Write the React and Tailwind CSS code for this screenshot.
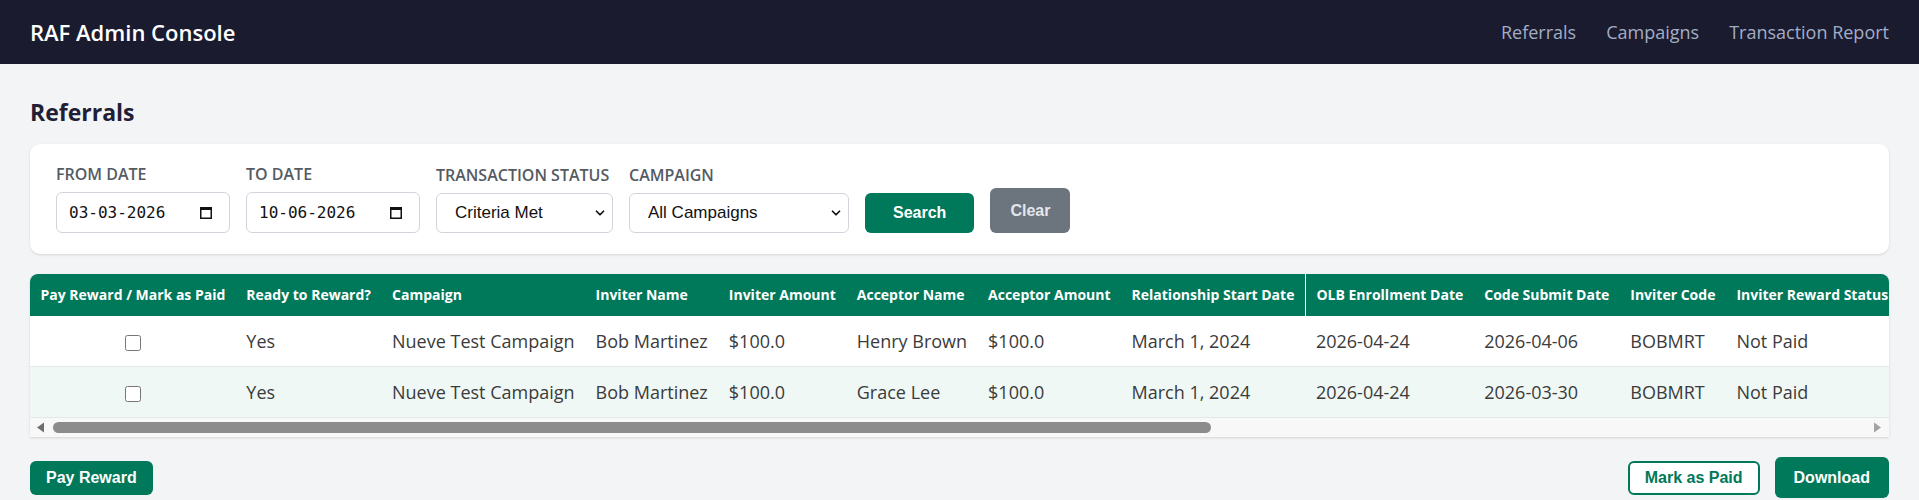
import { ChevronDown } from 'lucide-react';

const GREEN = 'bg-[#00785a]';

const columns = [
  'Pay Reward / Mark as Paid',
  'Ready to Reward?',
  'Campaign',
  'Inviter Name',
  'Inviter Amount',
  'Acceptor Name',
  'Acceptor Amount',
  'Relationship Start Date',
  'OLB Enrollment Date',
  'Code Submit Date',
  'Inviter Code',
  'Inviter Reward Status',
];

const rows = [
  {
    ready: 'Yes', campaign: 'Nueve Test Campaign', inviter: 'Bob Martinez', inviterAmt: '$100.0',
    acceptor: 'Henry Brown', acceptorAmt: '$100.0', relStart: 'March 1, 2024', olb: '2026-04-24',
    submit: '2026-04-06', code: 'BOBMRT', inviterStatus: 'Not Paid',
  },
  {
    ready: 'Yes', campaign: 'Nueve Test Campaign', inviter: 'Bob Martinez', inviterAmt: '$100.0',
    acceptor: 'Grace Lee', acceptorAmt: '$100.0', relStart: 'March 1, 2024', olb: '2026-04-24',
    submit: '2026-03-30', code: 'BOBMRT', inviterStatus: 'Not Paid',
  },
];

function CalendarIcon() {
  return (
    <svg width="14" height="15" viewBox="0 0 14 15" className="shrink-0">
      <rect x="1.75" y="2.75" width="10.5" height="10.5" fill="none" stroke="#111" strokeWidth="1.5" />
      <rect x="1" y="2" width="12" height="3" fill="#111" />
    </svg>
  );
}

function DateField({ label, value }) {
  return (
    <div className="flex flex-col">
      <span className="mb-1.5 text-base leading-6 font-semibold text-[#555b63] uppercase">{label}</span>
      <div className="flex h-[41px] w-[174px] items-center justify-between rounded-md border border-[#d1d5db] bg-white pl-3 pr-4">
        <span className="font-['DejaVu_Sans_Mono',monospace] text-base text-[#111]">{value}</span>
        <CalendarIcon />
      </div>
    </div>
  );
}

function SelectField({ label, value, width }) {
  return (
    <div className="flex flex-col">
      <span className="mb-1.5 text-base leading-6 font-semibold text-[#555b63] uppercase whitespace-nowrap">{label}</span>
      <div className={`relative ${width}`}>
        <select
          defaultValue={value}
          className="h-10 w-full appearance-none rounded-md border border-[#d1d5db] bg-white pl-[18px] pr-6 font-['Liberation_Sans',Arial,sans-serif] text-[17px] text-[#111]"
        >
          <option>{value}</option>
        </select>
        <ChevronDown size={14} strokeWidth={3} className="pointer-events-none absolute right-[6px] top-[13px] text-[#111]" />
      </div>
    </div>
  );
}

function ScrollBar() {
  return (
    <div className="flex h-[19px] items-center bg-[#f8f8f8] pl-[6px] pr-[7px]">
      <svg width="9" height="11" viewBox="0 0 9 11">
        <path d="M8 0.5v10L1 5.5z" fill="#6f6f6f" />
      </svg>
      <div className="ml-2 h-[11px] w-[1158px] rounded-full bg-[#8c8c8c]" />
      <div className="flex-1" />
      <svg width="9" height="11" viewBox="0 0 9 11">
        <path d="M1 0.5v10L8 5.5z" fill="#a3a3a3" />
      </svg>
    </div>
  );
}

export default function App() {
  return (
    <div className="min-h-screen w-full bg-[#f3f4f6] font-['Open_Sans',sans-serif]">
      <header className="flex h-16 items-center justify-between bg-[#1a1b2f] px-[30px]">
        <h1 className="text-[22px] font-semibold text-white">RAF Admin Console</h1>
        <nav className="flex items-center gap-[30px] text-lg text-[#a3adc4]">
          <a>Referrals</a>
          <a>Campaigns</a>
          <a>Transaction Report</a>
        </nav>
      </header>

      <main className="px-[30px] pt-8">
        <h2 className="mb-4 text-[23px] leading-8 font-bold text-[#1f2035]">Referrals</h2>

        <div className="rounded-[10px] bg-white pt-[18px] pb-[21px] pl-[26px] pr-6 shadow-sm">
          <div className="flex items-end gap-4">
            <DateField label="From Date" value="03-03-2026" />
            <DateField label="To Date" value="10-06-2026" />
            <SelectField label="Transaction Status" value="Criteria Met" width="w-[177px]" />
            <SelectField label="Campaign" value="All Campaigns" width="w-[220px]" />
            <button className={`h-10 rounded-md ${GREEN} px-7 font-['Liberation_Sans',Arial,sans-serif] text-base font-bold text-white`}>
              Search
            </button>
            <button className="h-[45px] rounded-md bg-[#6c747e] px-5 font-['Liberation_Sans',Arial,sans-serif] text-base font-bold text-[#e3e6ea]">
              Clear
            </button>
          </div>
        </div>

        <div className="mt-5 overflow-hidden rounded-t-lg bg-white shadow-sm">
          <table className="min-w-full border-collapse">
            <thead>
              <tr className={GREEN}>
                {columns.map((c, i) => (
                  <th
                    key={c}
                    className={`px-[10.5px] py-[11px] text-left text-sm leading-5 font-bold whitespace-nowrap text-white ${
                      i === 7 ? 'border-r border-white' : ''
                    } ${i === columns.length - 1 ? 'w-full' : ''}`}
                  >
                    {c}
                  </th>
                ))}
              </tr>
            </thead>
            <tbody>
              {rows.map((r, i) => (
                <tr key={i} className={`border-b border-[#e5e7eb] ${i % 2 ? 'bg-[#eff8f5]' : 'bg-white'}`}>
                  <td className="px-[10.5px] py-[11px] text-center">
                    <input type="checkbox" className="h-4 w-4 align-middle" />
                  </td>
                  {[
                    r.ready, r.campaign, r.inviter, r.inviterAmt, r.acceptor, r.acceptorAmt, r.relStart,
                    r.olb, r.submit, r.code, r.inviterStatus,
                  ].map((v, j) => (
                    <td key={j} className="px-[10.5px] py-[11px] text-lg leading-7 whitespace-nowrap text-[#3b3b3b]">
                      {v}
                    </td>
                  ))}
                </tr>
              ))}
            </tbody>
          </table>
          <ScrollBar />
        </div>

        <div className="mt-5 flex items-center justify-between font-['Liberation_Sans',Arial,sans-serif] text-base font-bold">
          <button className={`h-[34px] rounded-md ${GREEN} px-4 text-white`}>Pay Reward</button>
          <div className="flex items-center gap-[15px]">
            <button className="h-[34px] rounded-md border-2 border-[#00785a] bg-white px-[15px] text-[#00785a]">
              Mark as Paid
            </button>
            <button className={`h-[41px] rounded-md ${GREEN} px-[19px] text-white`}>Download</button>
          </div>
        </div>
      </main>
    </div>
  );
}
